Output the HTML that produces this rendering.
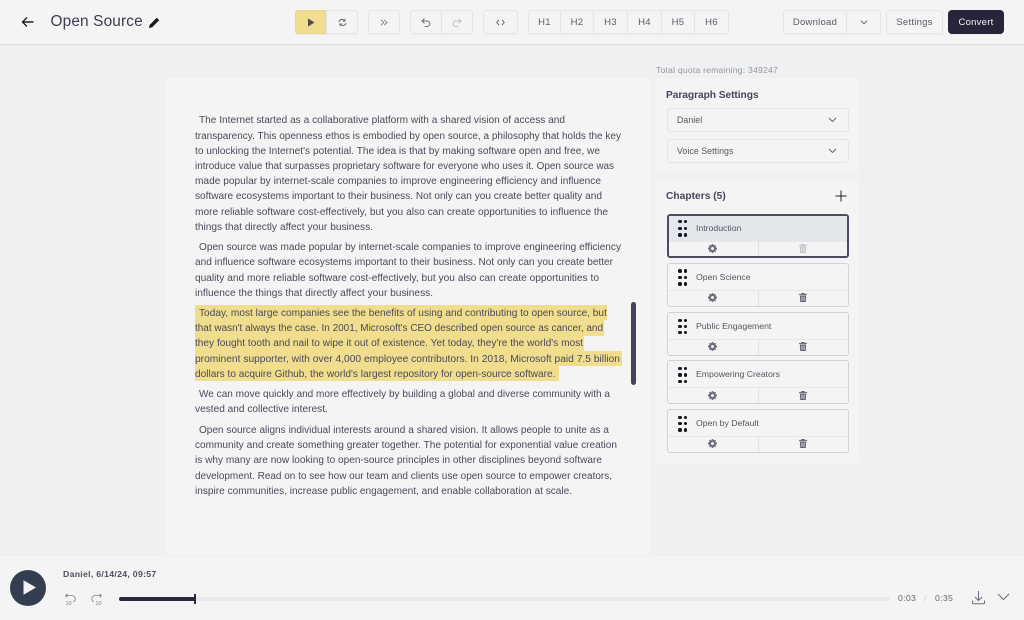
<!DOCTYPE html>
<html lang="en"><head><meta charset="utf-8"><title>Open Source</title>
<style>
*{box-sizing:border-box;margin:0;padding:0}
html,body{width:1024px;height:620px;overflow:hidden}
body{position:relative;background:#eef0f2;font-family:"Liberation Sans",sans-serif;color:#4b4a5a}
.a{position:absolute}
header{position:absolute;left:0;top:0;width:1024px;height:45px;background:#f4f4f5;border-bottom:1px solid #d6d9df}
.b{position:absolute;top:10px;height:24px;border:1px solid #e4e5e9;border-radius:3px;background:#f4f4f5;display:flex;align-items:center;justify-content:center;font-size:9.5px;letter-spacing:.25px;color:#5a5a68;box-shadow:0 1px 1px rgba(60,60,80,.04)}
.b svg{display:block}
.panel{position:absolute;background:#f4f4f5}
.l{position:absolute;height:15px;line-height:15px;margin-top:1px;white-space:nowrap;text-align:justify;text-align-last:justify;color:#4b4a5a}
.hl{position:absolute;height:15.4px;left:195px;background:#f0dd8e}
.sel{position:absolute;left:667px;width:182px;height:24px;border:1px solid #e2e4e8;border-radius:3px;font-size:8.8px;line-height:22px;padding-left:9px;color:#55555f;letter-spacing:.05px}
.sel svg{position:absolute;right:11px;top:8px}
.card{position:absolute;left:667px;width:182px;height:44px;border:1px solid #cfd2d9;border-radius:3px;background:#f4f4f5}
.card.on{border:2px solid #4d4a62}
.card .t{position:absolute;left:28px;top:0;height:28px;line-height:27px;font-size:8.7px;color:#55555f}
.card .r{position:absolute;left:0;right:0;top:26px;bottom:0;border-top:1px solid #e7e8eb}
.card .v{position:absolute;left:89.5px;top:26px;bottom:0;width:1px;background:#dfe1e5}
.card.on .top{position:absolute;left:0;right:0;top:0;height:25px;background:#e3e6ea}
.d{position:absolute;width:3.4px;height:3.4px;border-radius:50%;background:#15151d}
</style></head><body>

<header></header>
<svg class="a" style="left:20px;top:14px" width="16" height="16" viewBox="0 0 16 16" fill="none" stroke="#20202a" stroke-width="1.4"><path d="M13.5 8H2.5M7 3.5 2.5 8 7 12.5"/></svg>
<div class="a" style="left:50.5px;top:12px;font-size:15.4px;line-height:20px;color:#3d3c4e;letter-spacing:.15px">Open Source</div>
<svg class="a" style="left:148px;top:16px" width="13" height="13" viewBox="0 0 13 13"><path d="M1 12l.6-3L8.8 1.800l2.400 2.400L4 11.400z" fill="#17171f"/></svg>

<div class="b" style="left:295px;width:32px;background:#f0dd8e;border-color:#e9d584;border-radius:3px 0 0 3px"><svg width="8" height="9" viewBox="0 0 8 9"><path d="M1 .5v8l6.500-4z" fill="#4a4a55"/></svg></div>
<div class="b" style="left:326px;width:32px;border-radius:0 3px 3px 0"><svg width="9" height="9" viewBox="0 0 9 9" fill="none" stroke="#5f5f6b" stroke-width=".9"><path d="M1 4C1.300 2.500 2.500 1.500 4 1.500c1 0 2 .4 2.800 1.300M7 .8v2.300H4.900M8 5C7.700 6.500 6.500 7.500 5 7.500c-1 0-2-.4-2.800-1.300M2 8.200V5.900h2.100"/></svg></div>
<div class="b" style="left:368px;width:32px"><svg width="8" height="7" viewBox="0 0 8 7" fill="none" stroke="#777783" stroke-width=".8"><path d="M1 .8l2.700 2.700L1 6.200M4.300 .8 7 3.500 4.300 6.200"/></svg></div>
<div class="b" style="left:410px;width:32px;border-radius:3px 0 0 3px"><svg width="10" height="9" viewBox="0 0 10 9" fill="none" stroke="#65656f" stroke-width=".9"><path d="M3.500 .6 1 3l2.500 2.400M1 3h5.200a2.700 2.700 0 0 1 0 5.400H3.500"/></svg></div>
<div class="b" style="left:441px;width:32px;border-radius:0 3px 3px 0"><svg width="10" height="9" viewBox="0 0 10 9" fill="none" stroke="#bdbec5" stroke-width=".9"><path d="M6.500 .6 9 3 6.500 5.400M9 3H3.800a2.700 2.700 0 0 0 0 5.400h2.700"/></svg></div>
<div class="b" style="left:483px;width:35px"><svg width="9" height="7" viewBox="0 0 9 7" fill="none" stroke="#5f5f6b" stroke-width=".9"><path d="M3 .8.8 3.500 3 6.200M6 .8l2.200 2.700L6 6.200"/></svg></div>

<div class="b" style="left:528px;width:33px;border-radius:3px 0 0 3px">H1</div>
<div class="b" style="left:560px;width:34px;border-radius:0">H2</div>
<div class="b" style="left:593px;width:35px;border-radius:0">H3</div>
<div class="b" style="left:627px;width:35px;border-radius:0">H4</div>
<div class="b" style="left:661px;width:34px;border-radius:0">H5</div>
<div class="b" style="left:694px;width:35px;border-radius:0 3px 3px 0">H6</div>

<div class="b" style="left:783px;width:64px;border-radius:3px 0 0 3px">Download</div>
<div class="b" style="left:846px;width:35px;border-radius:0 3px 3px 0"><svg width="8" height="5" viewBox="0 0 8 5" fill="none" stroke="#5f5f6b" stroke-width=".9"><path d="M1 .8 4 3.800 7 .8"/></svg></div>
<div class="b" style="left:886px;width:57px">Settings</div>
<div class="b" style="left:948px;width:56px;background:#29243a;border-color:#29243a;color:#f4f4f5;border-radius:4px">Convert</div>

<div class="a" style="left:656px;top:64px;font-size:8.6px;line-height:12px;letter-spacing:.22px;color:#94959e">Total quota remaining: 349247</div>

<!-- editor -->
<div class="panel" style="left:165px;top:78px;width:486px;height:492px"></div>
<div class="hl" style="top:305px;width:412px"></div>
<div class="hl" style="top:320.300px;width:409px"></div>
<div class="hl" style="top:335.600px;width:389px"></div>
<div class="hl" style="top:350.900px;width:427px"></div>
<div class="hl" style="top:366px;width:364px"></div>

<div class="l" style="left:199px;width:366px;top:112px;font-size:10.1px">The Internet started as a collaborative platform with a shared vision of access and</div>
<div class="l" style="left:195px;width:426px;top:127.500px;font-size:10px">transparency. This openness ethos is embodied by open source, a philosophy that holds the key</div>
<div class="l" style="left:195px;width:405px;top:142.500px;font-size:10.13px">to unlocking the Internet's potential. The idea is that by making software open and free, we</div>
<div class="l" style="left:195px;width:419px;top:158px;font-size:9.93px">introduce value that surpasses proprietary software for everyone who uses it. Open source was</div>
<div class="l" style="left:195px;width:406px;top:173px;font-size:10.15px">made popular by internet-scale companies to improve engineering efficiency and influence</div>
<div class="l" style="left:195px;width:407px;top:188px;font-size:10.08px">software ecosystems important to their business. Not only can you create better quality and</div>
<div class="l" style="left:195px;width:413px;top:203.500px;font-size:10.16px">more reliable software cost-effectively, but you also can create opportunities to influence the</div>
<div class="l" style="left:195px;width:178px;top:218.500px;font-size:10.15px">things that directly affect your business.</div>

<div class="l" style="left:199px;width:422px;top:238.500px;font-size:10.09px">Open source was made popular by internet-scale companies to improve engineering efficiency</div>
<div class="l" style="left:195px;width:418px;top:254px;font-size:10.07px">and influence software ecosystems important to their business. Not only can you create better</div>
<div class="l" style="left:195px;width:404px;top:269.500px;font-size:10.15px">quality and more reliable software cost-effectively, but you also can create opportunities to</div>
<div class="l" style="left:195px;width:238px;top:284.500px;font-size:10.16px">influence the things that directly affect your business.</div>

<div class="l" style="left:199px;width:407px;top:305px;font-size:10.13px">Today, most large companies see the benefits of using and contributing to open source, but</div>
<div class="l" style="left:195px;width:408px;top:320px;font-size:9.96px">that wasn't always the case. In 2001, Microsoft's CEO described open source as cancer, and</div>
<div class="l" style="left:195px;width:388px;top:335px;font-size:10.12px">they fought tooth and nail to wipe it out of existence. Yet today, they're the world's most</div>
<div class="l" style="left:195px;width:425px;top:350.500px;font-size:10.23px">prominent supporter, with over 4,000 employee contributors. In 2018, Microsoft paid 7.5 billion</div>
<div class="l" style="left:195px;width:360px;top:366px;font-size:10.1px">dollars to acquire Github, the world's largest repository for open-source software.</div>

<div class="l" style="left:199px;width:411px;top:386px;font-size:10.04px">We can move quickly and more effectively by building a global and diverse community with a</div>
<div class="l" style="left:195px;width:132px;top:401px;font-size:10.15px">vested and collective interest.</div>

<div class="l" style="left:199px;width:410px;top:421.500px;font-size:10.02px">Open source aligns individual interests around a shared vision. It allows people to unite as a</div>
<div class="l" style="left:195px;width:422px;top:437px;font-size:10.09px">community and create something greater together. The potential for exponential value creation</div>
<div class="l" style="left:195px;width:407px;top:452px;font-size:10.08px">is why many are now looking to open-source principles in other disciplines beyond software</div>
<div class="l" style="left:195px;width:417px;top:467.500px;font-size:9.97px">development. Read on to see how our team and clients use open source to empower creators,</div>
<div class="l" style="left:195px;width:377px;top:482.500px;font-size:10.11px">inspire communities, increase public engagement, and enable collaboration at scale.</div>

<div class="a" style="left:631px;top:302px;width:5px;height:83px;border-radius:2.500px;background:#46435b"></div>

<!-- settings -->
<div class="panel" style="left:656px;top:78px;width:203px;height:95px"></div>
<div class="a" style="left:666px;top:89px;font-size:10.2px;line-height:13px;font-weight:bold;letter-spacing:-.05px;color:#46465a">Paragraph Settings</div>
<div class="sel" style="top:108px">Daniel<svg width="9" height="6" viewBox="0 0 9 6" fill="none" stroke="#5f5f6b" stroke-width=".9"><path d="M1 1l3.500 3.500L8 1"/></svg></div>
<div class="sel" style="top:139px">Voice Settings<svg width="9" height="6" viewBox="0 0 9 6" fill="none" stroke="#5f5f6b" stroke-width=".9"><path d="M1 1l3.500 3.500L8 1"/></svg></div>

<div class="panel" style="left:656px;top:179px;width:203px;height:284px"></div>
<div class="a" style="left:666px;top:190px;font-size:10.2px;line-height:13px;font-weight:bold;letter-spacing:.03px;color:#46465a">Chapters (5)</div>
<svg class="a" style="left:835px;top:190px" width="12" height="12" viewBox="0 0 12 12" fill="none" stroke="#20202a" stroke-width="1"><path d="M6 .5v11M.5 6h11"/></svg>

<svg width="0" height="0" style="position:absolute"><defs>
<g id="gear"><path fill-rule="evenodd" d="M3.800 0h1.400l.2 1.100.7.300.9-.6 1 1-.6.900.3.700L9 3.600v1.800l-1.300.2-.3.700.6.900-1 1-.9-.6-.7.300L5.200 9H3.800l-.2-1.100-.7-.3-.9.600-1-1 .6-.9-.3-.7L0 5.400V3.600l1.300-.2.300-.7-.6-.9 1-1 .9.600.7-.3zM4.500 3a1.500 1.500 0 1 0 0 3 1.500 1.500 0 0 0 0-3z" fill="currentColor"/></g>
<g id="trash"><path fill-rule="evenodd" d="M2.700 0h2.600l.4.900H8v1H0v-1h2.300zM.8 2.500h6.400L6.700 9H1.300zM2.400 3.500l.2 4.500h.8l-.1-4.500zM4.700 3.500 4.600 8h.8l.2-4.500z" fill="currentColor"/></g>
</defs></svg>

<div class="card on" style="top:214px;height:43.500px"><div class="top"></div><div class="t" style="top:0;height:25px;line-height:25px;left:27px">Introduction</div><div class="r" style="top:25px"></div><div class="v" style="top:25px;left:88.500px"></div></div>
<div class="card" style="top:263px"><div class="t">Open Science</div><div class="r"></div><div class="v"></div></div>
<div class="card" style="top:312px"><div class="t">Public Engagement</div><div class="r"></div><div class="v"></div></div>
<div class="card" style="top:360px"><div class="t">Empowering Creators</div><div class="r"></div><div class="v"></div></div>
<div class="card" style="top:409px"><div class="t">Open by Default</div><div class="r"></div><div class="v"></div></div>

<!-- dots -->
<div class="d" style="left:678.300px;top:220px"></div><div class="d" style="left:683.700px;top:220px"></div><div class="d" style="left:678.300px;top:226.700px"></div><div class="d" style="left:683.700px;top:226.700px"></div><div class="d" style="left:678.300px;top:233.300px"></div><div class="d" style="left:683.700px;top:233.300px"></div>
<div class="d" style="left:678.300px;top:269.300px"></div><div class="d" style="left:683.700px;top:269.300px"></div><div class="d" style="left:678.300px;top:275.600px"></div><div class="d" style="left:683.700px;top:275.600px"></div><div class="d" style="left:678.300px;top:282.300px"></div><div class="d" style="left:683.700px;top:282.300px"></div>
<div class="d" style="left:678.300px;top:318.600px"></div><div class="d" style="left:683.700px;top:318.600px"></div><div class="d" style="left:678.300px;top:325px"></div><div class="d" style="left:683.700px;top:325px"></div><div class="d" style="left:678.300px;top:331px"></div><div class="d" style="left:683.700px;top:331px"></div>
<div class="d" style="left:678.300px;top:367px"></div><div class="d" style="left:683.700px;top:367px"></div><div class="d" style="left:678.300px;top:373.300px"></div><div class="d" style="left:683.700px;top:373.300px"></div><div class="d" style="left:678.300px;top:379.600px"></div><div class="d" style="left:683.700px;top:379.600px"></div>
<div class="d" style="left:678.300px;top:415.600px"></div><div class="d" style="left:683.700px;top:415.600px"></div><div class="d" style="left:678.300px;top:422px"></div><div class="d" style="left:683.700px;top:422px"></div><div class="d" style="left:678.300px;top:428.300px"></div><div class="d" style="left:683.700px;top:428.300px"></div>

<!-- card icons -->
<svg class="a" style="left:708px;top:244px;color:#6b6c78" width="9" height="9"><use href="#gear"/></svg>
<svg class="a" style="left:799px;top:244px;color:#c0c2c8" width="8" height="9"><use href="#trash"/></svg>
<svg class="a" style="left:708px;top:293px;color:#6b6c78" width="9" height="9"><use href="#gear"/></svg>
<svg class="a" style="left:799px;top:293px;color:#5f606a" width="8" height="9"><use href="#trash"/></svg>
<svg class="a" style="left:708px;top:342px;color:#6b6c78" width="9" height="9"><use href="#gear"/></svg>
<svg class="a" style="left:799px;top:342px;color:#5f606a" width="8" height="9"><use href="#trash"/></svg>
<svg class="a" style="left:708px;top:390.500px;color:#6b6c78" width="9" height="9"><use href="#gear"/></svg>
<svg class="a" style="left:799px;top:390.500px;color:#5f606a" width="8" height="9"><use href="#trash"/></svg>
<svg class="a" style="left:708px;top:439px;color:#6b6c78" width="9" height="9"><use href="#gear"/></svg>
<svg class="a" style="left:799px;top:439px;color:#5f606a" width="8" height="9"><use href="#trash"/></svg>

<!-- player -->
<div class="a" style="left:0;top:555px;width:1024px;height:65px;background:#f4f4f5;border-top:1px solid #ecedf0"></div>
<div class="a" style="left:10px;top:569.500px;width:36px;height:36px;border-radius:50%;background:#343d52"></div>
<svg class="a" style="left:22px;top:579px" width="15" height="17" viewBox="0 0 15 17"><path d="M1.500 1.200v14.600L14 8.500z" fill="#f4f4f5"/></svg>
<div class="a" style="left:63px;top:568px;font-size:8.7px;line-height:12px;font-weight:bold;letter-spacing:.3px;color:#50505e">Daniel, 6/14/24, 09:57</div>

<svg class="a" style="left:64px;top:593px" width="13" height="13" viewBox="0 0 13 13" fill="none" stroke="#7b7c88" stroke-width=".8"><path d="M3.500.8 1.500 2.600l2 1.800M1.500 2.600H8a3.300 3.300 0 0 1 3.200 3.300c0 1.500-.8 2.600-2 3.100"/><text x="1.500" y="12" font-size="5.500" font-family="Liberation Sans" fill="#7b7c88" stroke="none">10</text></svg>
<svg class="a" style="left:90px;top:593px" width="13" height="13" viewBox="0 0 13 13" fill="none" stroke="#7b7c88" stroke-width=".8"><path d="M9.500.8l2 1.800-2 1.800M11.500 2.600H5A3.300 3.300 0 0 0 1.800 5.900c0 1.500.8 2.600 2 3.100"/><text x="5.500" y="12" font-size="5.500" font-family="Liberation Sans" fill="#7b7c88" stroke="none">10</text></svg>

<div class="a" style="left:119px;top:597px;width:771px;height:4px;border-radius:2px;background:#e9eaee"></div>
<div class="a" style="left:119px;top:597px;width:76px;height:4px;border-radius:2px 0 0 2px;background:#2c283c"></div>
<div class="a" style="left:194px;top:594px;width:1.500px;height:10px;background:#2c283c"></div>

<div class="a" style="left:898px;top:592px;font-size:8.7px;line-height:12px;letter-spacing:.3px;color:#666772">0:03</div>
<div class="a" style="left:924px;top:592px;font-size:8.7px;line-height:12px;color:#c3c4ca">/</div>
<div class="a" style="left:935px;top:592px;font-size:8.7px;line-height:12px;letter-spacing:.3px;color:#666772">0:35</div>

<svg class="a" style="left:971px;top:590px" width="15" height="15" viewBox="0 0 15 15" fill="none" stroke="#6a6b77" stroke-width="1"><path d="M7.500 1v9M4 7l3.500 3.500L11 7M1.500 10.500v2.200a1 1 0 0 0 1 1h10a1 1 0 0 0 1-1v-2.200"/></svg>
<svg class="a" style="left:997px;top:593px" width="13" height="8" viewBox="0 0 13 8" fill="none" stroke="#6a6b77" stroke-width="1"><path d="M1 1l5.500 5.500L12 1"/></svg>

</body></html>
